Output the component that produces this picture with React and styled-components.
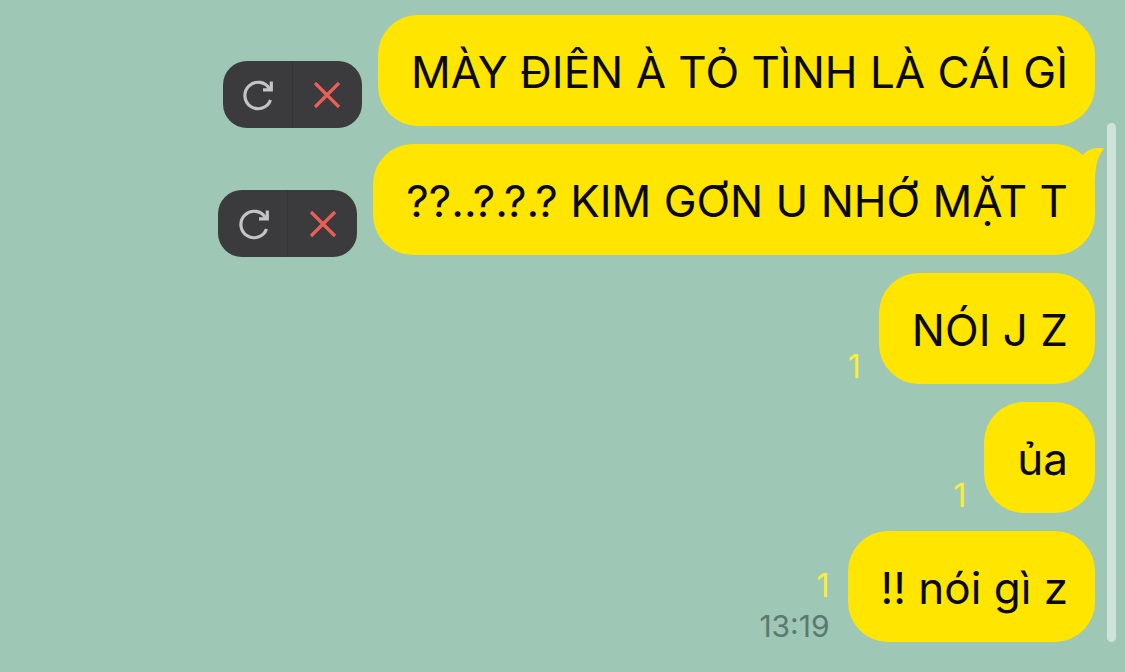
import styled, { createGlobalStyle } from 'styled-components';

const GlobalStyle = createGlobalStyle`
  body {
    margin: 0;
    background: #9fc7b6;
    font-family: Inter, Roboto, sans-serif;
  }
`;

const ChatRoom = styled.main`
  position: relative;
  box-sizing: border-box;
  min-height: 100vh;
  padding: 15px 30px 30px;
`;

const MessageList = styled.ul`
  display: flex;
  flex-direction: column;
  gap: 18px;
  margin: 0;
  padding: 0;
  list-style: none;
`;

const MessageRow = styled.li`
  display: flex;
  justify-content: flex-end;
  align-items: flex-end;
`;

const Bubble = styled.div`
  position: relative;
  padding: 31px 27px 28px 33px;
  border-radius: 40px;
  background: #ffe500;
  color: #0a0a00;
  font-size: 44px;
  line-height: 52px;
`;

const Tail = styled.svg`
  position: absolute;
  top: 3px;
  right: -10px;
  width: 24px;
  height: 36px;
  fill: #ffe500;
`;

const Meta = styled.div`
  display: flex;
  flex-direction: column;
  align-items: flex-end;
  gap: 7px;
  margin-right: 18px;
`;

const Unread = styled.span`
  color: #fbee35;
  font-size: 32px;
  line-height: 34px;
`;

const Time = styled.time`
  color: #597a6d;
  font-size: 30px;
  line-height: 32px;
`;

const Actions = styled.div`
  display: flex;
  margin: 0 16px -2px 0;
  border-radius: 24px;
  background: #3b3a3c;
  overflow: hidden;
`;

const ActionButton = styled.button`
  display: flex;
  align-items: center;
  justify-content: center;
  width: 69px;
  height: 67px;
  padding: 0;
  border: none;
  background: none;
  color: ${(props) => (props.$danger ? '#ec5f59' : '#c4c4c6')};
  cursor: pointer;

  & + & {
    width: 70px;
    border-left: 1px solid #343336;
  }
`;

const Icon = styled.svg`
  width: 32px;
  height: 32px;
  fill: none;
  stroke: currentColor;
  stroke-width: 3.2;
`;

const Scrollbar = styled.div`
  position: absolute;
  top: 123px;
  right: 9px;
  bottom: 30px;
  width: 9px;
  border-radius: 5px;
  background: #cfe3da;
`;

const messages = [
    { id: 1, text: 'MÀY ĐIÊN À TỎ TÌNH LÀ CÁI GÌ', failed: true },
    { id: 2, text: '??..?.?.? KIM GƠN U NHỚ MẶT T', failed: true, tail: true },
    { id: 3, text: 'NÓI J Z', unread: 1 },
    { id: 4, text: 'ủa', unread: 1 },
    { id: 5, text: '!! nói gì z', unread: 1, time: '13:19' },
];

function FailedActions() {
    return (
        <Actions>
            <ActionButton type="button" aria-label="Resend">
                <Icon viewBox="-1 0 32 32">
                    <path d="M28.5 21A13.2 13.2 0 1 1 27.6 10" />
                    <path d="M29.3 2.5V10.8H21" />
                </Icon>
            </ActionButton>
            <ActionButton type="button" aria-label="Delete" $danger>
                <Icon viewBox="0 0 32 32">
                    <path d="M4 4L28 28M28 4L4 28" />
                </Icon>
            </ActionButton>
        </Actions>
    );
}

function Message({ message }) {
    return (
        <MessageRow>
            {message.failed && <FailedActions />}
            {message.unread && (
                <Meta>
                    <Unread>{message.unread}</Unread>
                    {message.time && <Time>{message.time}</Time>}
                </Meta>
            )}
            <Bubble>
                {message.text}
                {message.tail && (
                    <Tail viewBox="0 0 24 36">
                        <path d="M1 9C6 3 13 0 23 1.5C17 9 14 17 14 36L8 22Z" />
                    </Tail>
                )}
            </Bubble>
        </MessageRow>
    );
}

export default function App() {
    return (
        <>
            <GlobalStyle />
            <ChatRoom>
                <MessageList>
                    {messages.map((message) => (
                        <Message key={message.id} message={message} />
                    ))}
                </MessageList>
                <Scrollbar />
            </ChatRoom>
        </>
    );
}
